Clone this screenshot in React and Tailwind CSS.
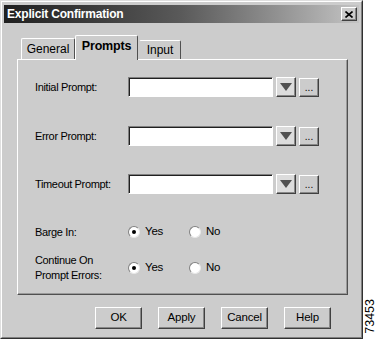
import React from 'react';

const font = { fontFamily: '"Liberation Sans", Arial, sans-serif' };

const raised =
  'border border-t-white border-l-white border-r-[#404040] border-b-[#404040] shadow-[inset_-1px_-1px_0_#888888]';

const PromptRow = ({ label, className = '' }) => (
  <div className={`flex items-center h-[20px] ${className}`}>
    <div className="w-[93px] text-[11px] text-black tracking-[-0.35px]">{label}</div>
    {/* Text box */}
    <div className="w-[145px] h-[20px] bg-white border border-t-[#808080] border-l-[#808080] border-r-white border-b-white shadow-[inset_1px_1px_0_#202020]"></div>
    {/* Dropdown button */}
    <div className={`ml-[3px] w-[20px] h-[20px] bg-[#dcdcdc] flex items-center justify-center ${raised}`}>
      <svg width="12" height="8" viewBox="0 0 12 8">
        <path d="M0 0 L12 0 L6 8 Z" fill="#505050" />
      </svg>
    </div>
    {/* Browse button */}
    <div className={`ml-[3px] w-[20px] h-[19px] bg-[#cccccc] flex items-end justify-center pb-[3px] text-[10px] leading-none text-black ${raised}`}>
      ...
    </div>
  </div>
);

const Radio = ({ checked, label }) => (
  <div className="flex items-center gap-[5px]">
    <div className="w-[12px] h-[12px] rounded-full bg-white border border-t-[#808080] border-l-[#808080] border-r-[#e8e8e8] border-b-[#e8e8e8] flex items-center justify-center">
      {checked && <div className="w-[4px] h-[4px] rounded-full bg-black"></div>}
    </div>
    <span className="text-[11.5px] text-black tracking-[-0.2px]">{label}</span>
  </div>
);

const RadioPair = () => (
  <div className="flex items-center">
    <div className="w-[61px]">
      <Radio checked label="Yes" />
    </div>
    <Radio label="No" />
  </div>
);

const Button = ({ children }) => (
  <div className={`w-[47px] h-[22px] bg-[#cccccc] flex items-center justify-center text-[11.5px] text-black tracking-[-0.2px] ${raised}`}>
    {children}
  </div>
);

export default function App() {
  return (
    <div className="w-[377px] h-[339px] bg-white flex" style={font}>
      {/* Dialog window */}
      <div className="w-[363px] h-[339px] bg-[#cccccc] border border-t-[#dfdfdf] border-l-[#dfdfdf] border-r-[#303030] border-b-[#303030] flex flex-col">
        <div className="flex-1 border border-t-white border-l-white border-r-[#808080] border-b-[#808080] p-[2px] flex flex-col">
          {/* Title bar */}
          <div className="mt-[1px] h-[18px] bg-gradient-to-r from-[#202020] via-[#5a5a5a] to-[#c4c4c4] flex items-center justify-between pl-[3px] pr-[2px]">
            <span className="text-white font-bold text-[12px] tracking-[-0.2px]">Explicit Confirmation</span>
            <div className={`w-[16px] h-[14px] bg-[#cccccc] flex items-center justify-center ${raised}`}>
              <svg width="8" height="7" viewBox="0 0 8 7">
                <path d="M0.5 0.5 L7.5 6.5 M7.5 0.5 L0.5 6.5" stroke="#000" strokeWidth="1.6" />
              </svg>
            </div>
          </div>

          {/* Tabs */}
          <div className="mt-[11px] ml-[15px] flex items-end h-[25px] relative z-10">
            <div className="w-[54px] h-[21px] mt-auto border border-b-0 border-t-white border-l-white border-r-[#505050] rounded-t-[2px] flex items-center justify-center text-[12px] text-black ml-[2px]">
              General
            </div>
            <div className="w-[63px] h-[25px] -mb-[1px] bg-[#cccccc] border border-b-0 border-t-white border-l-white border-r-[#505050] rounded-t-[2px] flex items-center justify-center font-bold text-[12.5px] tracking-[-0.2px] text-black pb-[3px]">
              Prompts
            </div>
            <div className="w-[42px] h-[19px] border border-b-0 border-t-white border-l-[#cccccc] border-r-[#505050] rounded-t-[2px] flex items-center justify-center text-[12px] text-black ml-[1px]">
              Input
            </div>
          </div>

          {/* Panel */}
          <div className="ml-[13px] w-[331px] h-[236px] border border-t-white border-l-white border-r-[#505050] border-b-[#505050] shadow-[inset_-1px_-1px_0_#9a9a9a] pt-[17px] pl-[17px] flex flex-col">
            <PromptRow label="Initial Prompt:" />
            <PromptRow label="Error Prompt:" className="mt-[29px]" />
            <PromptRow label="Timeout Prompt:" className="mt-[28px]" />

            <div className="mt-[30px] flex items-center h-[16px]">
              <div className="w-[93px] text-[11px] text-black tracking-[-0.35px]">Barge In:</div>
              <RadioPair />
            </div>

            <div className="mt-[13px] flex items-center">
              <div className="w-[93px] text-[11px] text-black leading-[15px] tracking-[-0.35px]">
                Continue On
                <br />
                Prompt Errors:
              </div>
              <RadioPair />
            </div>
          </div>

          {/* Buttons */}
          <div className="mt-[12px] ml-[91px] flex gap-[16px]">
            <Button>OK</Button>
            <Button>Apply</Button>
            <Button>Cancel</Button>
            <Button>Help</Button>
          </div>
        </div>
      </div>

      {/* Figure number */}
      <div className="flex-1 flex flex-col justify-end items-center pb-[5px]">
        <span className="[writing-mode:vertical-rl] rotate-180 text-[12.5px] text-black leading-none">73453</span>
      </div>
    </div>
  );
}
